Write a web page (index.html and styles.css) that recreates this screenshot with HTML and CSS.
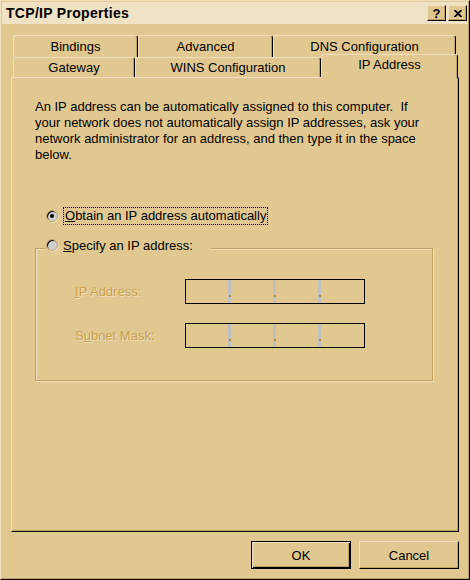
FILE: index.html
```html
<!DOCTYPE html>
<html lang="en">
  <head>
    <meta charset="UTF-8" />
    <title>TCP/IP Properties</title>
    <link rel="stylesheet" href="styles.css">
  </head>
  <body>
    <div class="window">
      <div class="titlebar">
        <span class="title">TCP/IP Properties</span>
        <span class="caption-btn help">?</span>
        <span class="caption-btn close">
          <svg width="8" height="7" viewBox="0 0 8 7">
            <path d="M0 0 L7 7 M1 0 L8 7 M7 0 L0 7 M8 0 L1 7" stroke="#000" stroke-width="1.2" />
          </svg>
        </span>
      </div>

      <div class="dialog">
        <div class="tabrow">
          <div class="tab w-bindings">Bindings</div>
          <div class="tab w-advanced">Advanced</div>
          <div class="tab w-dns">DNS Configuration</div>
        </div>
        <div class="tabrow front">
          <div class="tab w-gateway">Gateway</div>
          <div class="tab w-wins">WINS Configuration</div>
          <div class="tab w-ip active">IP Address</div>
        </div>

        <div class="panel">
          <p class="intro">
            An IP address can be automatically assigned to this computer.&nbsp; If
            your network does not automatically assign IP addresses, ask your
            network administrator for an address, and then type it in the space
            below.
          </p>

          <div class="option first">
            <span class="radio checked"></span>
            <span class="focus"><u>O</u>btain an IP address automatically</span>
          </div>

          <fieldset class="group">
            <legend>
              <span class="radio"></span>
              <span><u>S</u>pecify an IP address:</span>
            </legend>
            <div class="field">
              <span class="label"><u>I</u>P Address:</span>
              <div class="ipbox">
                <span class="seg"></span><span class="dot"></span>
                <span class="seg"></span><span class="dot"></span>
                <span class="seg"></span><span class="dot"></span>
                <span class="seg last"></span>
              </div>
            </div>
            <div class="field">
              <span class="label">S<u>u</u>bnet Mask:</span>
              <div class="ipbox">
                <span class="seg"></span><span class="dot"></span>
                <span class="seg"></span><span class="dot"></span>
                <span class="seg"></span><span class="dot"></span>
                <span class="seg last"></span>
              </div>
            </div>
          </fieldset>
        </div>

        <div class="buttons">
          <button class="btn default">OK</button>
          <button class="btn">Cancel</button>
        </div>
      </div>
    </div>
  </body>
</html>
```

FILE: styles.css
```css
body {
  margin: 0;
  font-family: 'Liberation Sans', Arial, sans-serif;
  font-size: 13px;
  color: #000;
  background-color: #e0c890;
}
.window {
  width: 470px;
  height: 580px;
  box-sizing: border-box;
  padding: 1px;
  background-color: #e0c890;
  border-top: 1px solid #f0e0c0;
  border-left: 1px solid #f0e0c0;
  border-right: 1px solid #000;
  border-bottom: 1px solid #000;
  box-shadow: inset -1px -1px 0 #c0a060;
}
.titlebar {
  height: 22px;
  display: flex;
  align-items: center;
  padding: 0 1px 0 4px;
  background-color: #f0e2c4;
}
.title {
  flex: 1;
  font-weight: bold;
  font-size: 14px;
  letter-spacing: 0.3px;
}
.caption-btn {
  width: 19px;
  height: 16px;
  box-sizing: border-box;
  display: flex;
  align-items: center;
  justify-content: center;
  background-color: #e0c890;
  border-top: 1px solid #f0e0c0;
  border-left: 1px solid #f0e0c0;
  border-right: 1px solid #000;
  border-bottom: 1px solid #000;
  box-shadow: inset -1px -1px 0 #c0a060;
  font-weight: bold;
  font-size: 13px;
}
.help {
  margin-right: 2px;
}
.dialog {
  padding: 11px 9px 0 9px;
}

/* tabs */
.tabrow {
  display: flex;
  padding-left: 2px;
}
.tab {
  height: 22px;
  box-sizing: border-box;
  text-align: center;
  line-height: 21px;
  border-top: 1px solid #f0e0c0;
  border-left: 1px solid #f0e0c0;
  border-right: 1px solid #000;
  border-radius: 3px 3px 0 0;
  box-shadow: inset -1px 0 0 #c0a060;
  background-color: #e0c890;
}
.tabrow.front .tab {
  height: 20px;
  line-height: 19px;
}
.tabrow.front .tab.active {
  height: 24px;
  line-height: 20px;
  margin-top: -3px;
  margin-bottom: -1px;
  position: relative;
  z-index: 1;
}
.w-bindings { width: 125px; }
.w-advanced { width: 135px; }
.w-dns { width: 183px; }
.w-gateway { width: 122px; }
.w-wins { width: 186px; }
.w-ip { width: 137px; }

.panel {
  width: 448px;
  height: 455px;
  box-sizing: border-box;
  padding: 21px 0 0 23px;
  border-top: 1px solid #f0e0c0;
  border-left: 1px solid #f0e0c0;
  border-right: 1px solid #000;
  border-bottom: 1px solid #000;
  box-shadow: inset -1px -1px 0 #c0a060;
}
.intro {
  margin: 0;
  width: 395px;
  line-height: 16px;
}

/* radios */
.option {
  display: flex;
  align-items: center;
  height: 18px;
  padding-left: 11px;
}
.option.first {
  margin-top: 44px;
}
.radio {
  width: 12px;
  height: 12px;
  box-sizing: border-box;
  border-radius: 50%;
  background-color: #d0d0d0;
  border: 1px solid #c0a060;
  box-shadow: inset 1px 1px 0 #000, 1px 1px 0 #f0e0c0;
  display: inline-flex;
  align-items: center;
  justify-content: center;
  margin-right: 5px;
  flex: none;
}
.radio.checked::after {
  content: "";
  width: 4px;
  height: 4px;
  border-radius: 50%;
  background-color: #000;
}
.focus {
  border: 1px dotted #000;
  padding: 0 1px;
  line-height: 16px;
}

/* group box */
.group {
  width: 398px;
  box-sizing: border-box;
  margin: 11px 0 0 0;
  padding: 0 0 32px 0;
  border: 1px solid #c0a060;
  box-shadow: inset 1px 1px 0 #f0e0c0, 1px 1px 0 #f0e0c0;
}
.group legend {
  display: flex;
  align-items: center;
  height: 18px;
  margin-left: 9px;
  padding: 0 18px 6px 1px;
  background-color: #e0c890;
}
.field {
  display: flex;
  align-items: center;
  margin-top: 19px;
  padding-left: 39px;
}
.label {
  width: 110px;
  color: #c8a050;
  text-shadow: 1px 1px 0 #f0e0c0;
}
.ipbox {
  width: 180px;
  height: 25px;
  box-sizing: border-box;
  border: 1px solid #000;
  display: flex;
}
.seg {
  width: 42px;
}
.seg.last {
  width: 43px;
}
.dot {
  width: 3px;
  background-color: #c0c0c0;
  display: flex;
  align-items: flex-end;
  justify-content: center;
  padding-bottom: 6px;
  box-sizing: border-box;
}
.dot::after {
  content: "";
  width: 2px;
  height: 2px;
  background-color: #b08838;
}

/* buttons */
.buttons {
  display: flex;
  justify-content: flex-end;
  gap: 8px;
  margin-top: 9px;
  width: 448px;
}
.btn {
  width: 100px;
  height: 28px;
  box-sizing: border-box;
  font-family: 'Liberation Sans', Arial, sans-serif;
  font-size: 13px;
  color: #000;
  background-color: #e0c890;
  border-top: 1px solid #f0e0c0;
  border-left: 1px solid #f0e0c0;
  border-right: 1px solid #000;
  border-bottom: 1px solid #000;
  box-shadow: inset -1px -1px 0 #c0a060;
  padding: 0;
}
.btn.default {
  border: 1px solid #000;
  box-shadow: inset 1px 1px 0 #f0e0c0, inset -1px -1px 0 #000, inset -2px -2px 0 #c0a060;
}
```
